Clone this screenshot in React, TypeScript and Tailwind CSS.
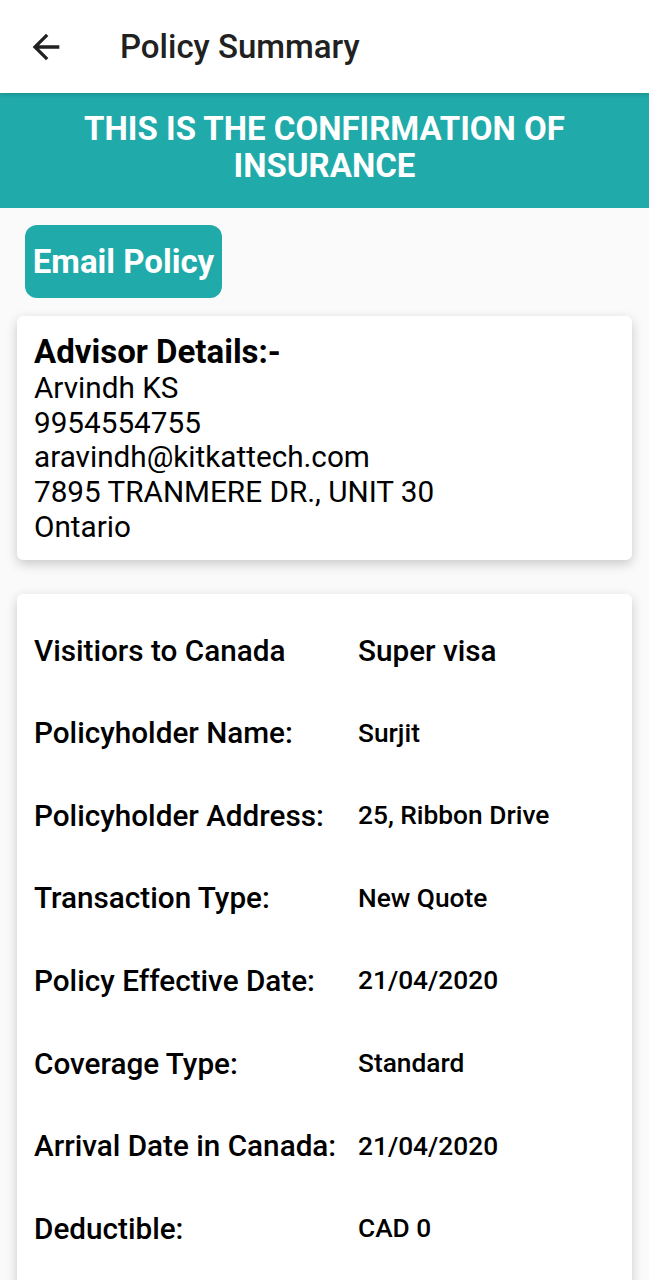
import React from "react";

const rows: [string, string, boolean][] = [
  ["Visitiors to Canada", "Super visa", true],
  ["Policyholder Name:", "Surjit", false],
  ["Policyholder Address:", "25, Ribbon Drive", false],
  ["Transaction Type:", "New Quote", false],
  ["Policy Effective Date:", "21/04/2020", false],
  ["Coverage Type:", "Standard", false],
  ["Arrival Date in Canada:", "21/04/2020", false],
  ["Deductible:", "CAD 0", false],
];

export default function App() {
  return (
    <div
      className="w-[649px] h-[1280px] overflow-hidden bg-[#fafafa] text-black"
      style={{ fontFamily: "Roboto, 'Noto Sans', sans-serif" }}
    >
      <header className="h-[93px] bg-white flex items-center relative z-10 shadow-[0_2px_4px_rgba(0,0,0,0.15)]">
        <div className="w-[120px] flex items-center pl-[26px]">
          <svg width="40" height="40" viewBox="0 0 24 24" fill="#212121">
            <path d="M20 11H7.83l5.59-5.59L12 4l-8 8 8 8 1.41-1.41L7.83 13H20v-2z" />
          </svg>
        </div>
        <h1 className="text-[33px] font-medium text-[#212121] leading-none">Policy Summary</h1>
      </header>

      <div className="bg-[#20abaa] h-[115px] pt-[17px] text-center">
        <p className="text-white font-bold text-[33px] leading-[37px]">
          THIS IS THE CONFIRMATION OF
          <br />
          INSURANCE
        </p>
      </div>

      <div className="pl-[25px] pt-[17px]">
        <button className="bg-[#20abaa] text-white font-bold text-[33px] rounded-[12px] h-[73px] w-[197px] flex items-center justify-center">
          Email Policy
        </button>
      </div>

      <div className="mx-[17px] mt-[18px] bg-white rounded-[6px] shadow-[0_4px_12px_rgba(0,0,0,0.2)] pl-[17px] pt-[17px] pb-[15px]">
        <div className="text-[33px] font-bold leading-[38px]">Advisor Details:-</div>
        <div className="text-[29.7px] leading-[34.7px]">
          <div>Arvindh KS</div>
          <div>9954554755</div>
          <div>aravindh@kitkattech.com</div>
          <div>7895 TRANMERE DR., UNIT 30</div>
          <div>Ontario</div>
        </div>
      </div>

      <div className="mx-[17px] mt-[34px] bg-white rounded-[6px] shadow-[0_4px_12px_rgba(0,0,0,0.2)] pl-[17px] pt-[16px] pb-[40px]">
        {rows.map(([label, value, big]) => (
          <div key={label} className="flex items-center h-[82.6px]">
            <div className="w-[324px] text-[29.7px] font-medium">{label}</div>
            <div className={big ? "text-[29.7px] font-medium" : "text-[26.3px] font-medium"}>{value}</div>
          </div>
        ))}
      </div>
    </div>
  );
}
